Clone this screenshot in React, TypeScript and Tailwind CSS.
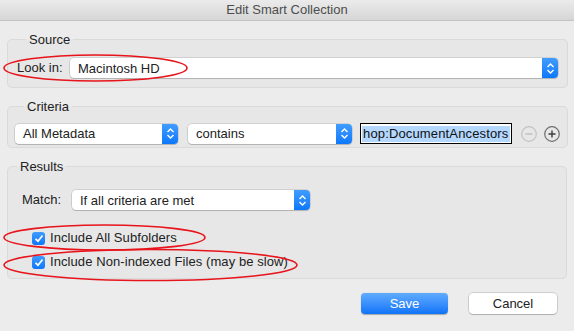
function Chevrons() {
  return (
    <svg width="9" height="13" viewBox="0 0 9 13" fill="none">
      <path d="M1.5 5 L4.5 2 L7.5 5" stroke="white" strokeWidth="1.4" />
      <path d="M1.5 8 L4.5 11 L7.5 8" stroke="white" strokeWidth="1.4" />
    </svg>
  );
}

function Popup(props: { label: string; className: string }) {
  return (
    <div
      className={
        "flex items-stretch h-[20px] bg-white rounded-[4px] shadow-[0_0_0_0.5px_rgba(0,0,0,0.2),0_1px_1px_rgba(0,0,0,0.15)] " +
        props.className
      }
    >
      <div className="flex-1 flex items-center pl-[8px] text-[13px] text-[#222] leading-none">
        {props.label}
      </div>
      <div className="w-[16px] flex items-center justify-center rounded-r-[4px] bg-gradient-to-b from-[#3f9cff] to-[#0a78fb]">
        <Chevrons />
      </div>
    </div>
  );
}

function Checkbox(props: { label: string }) {
  return (
    <div className="flex items-center h-[18px] pl-[25px]">
      <div className="w-[13px] h-[13px] rounded-[3px] bg-gradient-to-b from-[#3e9bff] to-[#0b77fb] flex items-center justify-center">
        <svg width="10" height="9" viewBox="0 0 10 9" fill="none">
          <path d="M1.5 4.8 L4 7.2 L8.5 1.5" stroke="white" strokeWidth="1.7" />
        </svg>
      </div>
      <span className="ml-[5px] text-[13px] text-[#222] tracking-[0.08px]">{props.label}</span>
    </div>
  );
}

export default function App() {
  return (
    <div
      className="relative w-[574px] h-[331px] bg-[#ececec] overflow-hidden"
      style={{ fontFamily: '"Liberation Sans", Arial, sans-serif' }}
    >
      <div className="h-[21px] flex items-center justify-center bg-gradient-to-b from-[#ebebeb] to-[#d6d6d6] border-b border-[#c4c4c4] text-[13px] text-[#4d4d4d]">
        Edit Smart Collection
      </div>

      <div className="px-[7px] pt-[11px] flex flex-col gap-[11px]">
        <fieldset className="border border-[#dadada] rounded-[5px] bg-[#e7e7e7] h-[56px] px-[9px]">
          <legend className="ml-[9px] px-[3px] text-[13px] text-[#222] leading-[15px]">Source</legend>
          <div className="flex items-center mt-[11px]">
            <span className="text-[13px] text-[#222] w-[53px]">Look in:</span>
            <Popup label="Macintosh HD" className="w-[488px]" />
          </div>
        </fieldset>

        <fieldset className="border border-[#dadada] rounded-[5px] bg-[#e7e7e7] h-[49px] px-[7px]">
          <legend className="ml-[9px] px-[3px] text-[13px] text-[#222] leading-[15px]">Criteria</legend>
          <div className="flex items-center mt-[9px]">
            <Popup label="All Metadata" className="w-[163px]" />
            <Popup label="contains" className="w-[164px] ml-[10px]" />
            <div className="ml-[8px] w-[152px] h-[21px] border border-black bg-white flex items-center px-[1px]">
              <span className="flex-1 bg-[#b4d7fe] text-[13px] text-[#111] leading-[16px] pl-px tracking-[0.15px]">
                hop:DocumentAncestors
              </span>
            </div>
            <svg className="ml-[9px]" width="16" height="16" viewBox="0 0 16 16" fill="none">
              <circle cx="8" cy="8" r="7.3" stroke="#c2c2c2" strokeWidth="1.2" />
              <path d="M4.5 8 H11.5" stroke="#bdbdbd" strokeWidth="1.4" />
            </svg>
            <svg className="ml-[7px]" width="16" height="16" viewBox="0 0 16 16" fill="none">
              <circle cx="8" cy="8" r="7.3" stroke="#6e6e6e" strokeWidth="1.2" />
              <path d="M4.5 8 H11.5 M8 4.5 V11.5" stroke="#3d3d3d" strokeWidth="1.4" />
            </svg>
          </div>
        </fieldset>

        <fieldset className="border border-[#dadada] rounded-[5px] bg-[#e7e7e7] h-[120px]">
          <legend className="ml-[9px] px-[3px] text-[13px] text-[#222] leading-[15px]">Results</legend>
          <div className="flex items-center mt-[16px] pl-[14px]">
            <span className="text-[13px] text-[#222] w-[50px]">Match:</span>
            <Popup label="If all criteria are met" className="w-[238px]" />
          </div>
          <div className="mt-[19px] flex flex-col gap-[6px] -ml-px">
            <Checkbox label="Include All Subfolders" />
            <Checkbox label="Include Non-indexed Files (may be slow)" />
          </div>
        </fieldset>
      </div>

      <div className="flex justify-end gap-[21px] pr-[17px] pt-[14px]">
        <button className="w-[87px] h-[21px] rounded-[4px] bg-gradient-to-b from-[#5fabff] to-[#0c73f8] text-white text-[13px] shadow-[0_0.5px_1px_rgba(0,0,0,0.3)]">
          Save
        </button>
        <button className="w-[88px] h-[21px] rounded-[4px] bg-white text-[#222] text-[13px] shadow-[0_0_0_0.5px_rgba(0,0,0,0.25),0_1px_1px_rgba(0,0,0,0.15)]">
          Cancel
        </button>
      </div>

      <svg className="absolute left-0 top-0 pointer-events-none" width="574" height="331" viewBox="0 0 574 331" fill="none">
        <ellipse cx="95.5" cy="68" rx="91.5" ry="13" stroke="#e8141b" strokeWidth="1.6" />
        <ellipse cx="104.5" cy="237.5" rx="100.5" ry="12.5" stroke="#e8141b" strokeWidth="1.6" />
        <ellipse cx="150.5" cy="265" rx="146.5" ry="15.5" stroke="#e8141b" strokeWidth="1.6" />
      </svg>
    </div>
  );
}
